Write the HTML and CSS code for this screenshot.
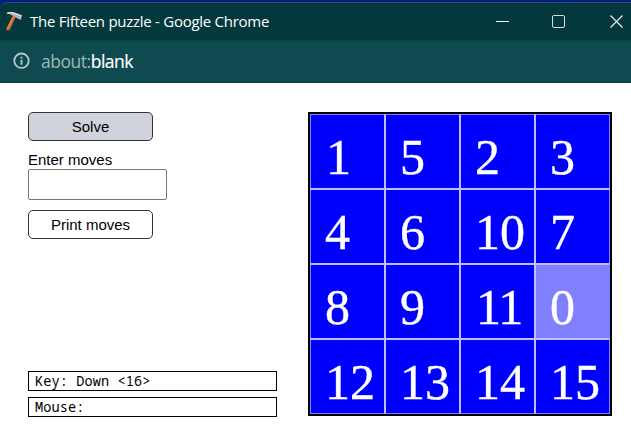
FILE: index.html
```
<!DOCTYPE html>
<html lang="en">
<head>
<meta charset="utf-8">
<title>The Fifteen puzzle</title>
<link rel="stylesheet" href="styles.css">
</head>
<body>
<div class="window">
  <header class="titlebar">
    <svg class="app-icon" width="18" height="21" viewBox="0 0 18 21">
      <path d="M7.8 4.5 10.8 5.7 5 18.6Q3 20.4 1 18.4Z" fill="#c9682a"/>
      <path d="M7.4 6 8.8 6.4 2.8 17.8 1.6 18Z" fill="#e58b48"/>
      <path d="M1.2 2.3Q5.5.2 9.5 1.4L17.2 4.2 15.8 9 9.8 6Q5.4 3 1.2 2.3Z" fill="#a9b2b5"/>
      <path d="M2 2.2Q6 .8 9.4 2.4L16 5" fill="none" stroke="#dfe4e5" stroke-width="1.2"/>
    </svg>
    <span class="title">The Fifteen puzzle - Google Chrome</span>
    <svg class="controls" width="135" height="34" viewBox="0 0 135 34" fill="none" stroke="#fff">
      <path d="M0 13.5h13"/>
      <rect x="56.5" y="7.5" width="12" height="12" rx="1.5" stroke="#d5dddd"/>
      <path d="M114.5 7.5l12 12M126.5 7.5l-12 12" stroke="#e8eeee" stroke-width="1.2"/>
    </svg>
  </header>
  <div class="addressbar">
    <svg class="info" width="18" height="18" viewBox="0 0 18 18">
      <circle cx="9.5" cy="8.7" r="7.2" fill="none" stroke="#b7c8ca" stroke-width="1.8"/>
      <path d="M8.6 7.8h1.8v5H8.6zM8.6 4.8h1.8v1.8H8.6z" fill="#b7c8ca"/>
    </svg>
    <span class="url">about:<span class="host">blank</span></span>
  </div>
  <main class="content">
    <section class="controls-panel">
      <button class="button button-active">Solve</button>
      <label class="label" for="moves">Enter moves</label>
      <input class="field" id="moves" type="text">
      <button class="button">Print moves</button>
      <div class="status status-key">Key: Down &lt;16&gt;</div>
      <div class="status">Mouse:</div>
    </section>
    <section class="board">
      <div class="tile tile-one">1</div><div class="tile">5</div><div class="tile">2</div><div class="tile">3</div>
      <div class="tile">4</div><div class="tile">6</div><div class="tile">10</div><div class="tile">7</div>
      <div class="tile">8</div><div class="tile">9</div><div class="tile tile-eleven">11</div><div class="tile tile-blank">0</div>
      <div class="tile">12</div><div class="tile">13</div><div class="tile">14</div><div class="tile">15</div>
    </section>
  </main>
</div>
</body>
</html>
```
FILE: styles.css
```
* { box-sizing: border-box; }
body { margin: 0; background: #fff; overflow: hidden; }
.window { width: 631px; height: 440px; padding-top: 2px; background: #00207a; }
.titlebar {
  display: flex;
  height: 39px;
  border-top: 1px solid #33487c;
  border-bottom: 1px solid #08444a;
  border-radius: 8px 0 0 0;
  background: #03393d;
}
.app-icon { margin: 8px 0 0 5px; flex: none; }
.title {
  margin-left: 7px;
  width: 466px;
  font: 15px/37px "Open Sans", "Noto Sans", sans-serif;
  letter-spacing: -0.27px;
  color: #fff;
  white-space: nowrap;
}
.controls { flex: none; margin-top: 5px; }
.addressbar {
  display: flex;
  align-items: center;
  height: 42px;
  padding-left: 12px;
  border-bottom: 2px solid #06444a;
  background: #0e4a50;
}
.url {
  margin-left: 11px;
  font: 17.5px/30px "Open Sans", "Noto Sans", sans-serif;
  letter-spacing: -0.48px;
  color: #9fb7b9;
}
.host { color: #fff; -webkit-text-stroke: 0.2px #fff; }
.content {
  display: flex;
  height: 357px;
  padding: 29px 0 0 28px;
  background: #fff;
}
.controls-panel {
  display: flex;
  flex-direction: column;
  align-items: flex-start;
  width: 280px;
  height: 305px;
}
.button {
  width: 125px;
  height: 29px;
  padding: 0;
  border: 1px solid #333;
  border-radius: 5px;
  background: #fff;
  color: #000;
  font: 15px "Liberation Sans", Arial, sans-serif;
}
.button-active { background: #d0d3dc; }
.label {
  margin-top: 10px;
  font: 15px/18px "Liberation Sans", Arial, sans-serif;
}
.field {
  width: 139px;
  height: 31px;
  margin-bottom: 10px;
  border: 1px solid #767676;
  border-radius: 2px;
}
.status {
  width: 249px;
  height: 20px;
  padding-left: 6px;
  border: 1px solid #000;
  font: 13.6px/18px "Noto Sans Mono", "DejaVu Sans Mono", monospace;
  letter-spacing: 0.1px;
  white-space: pre;
}
.status-key { margin: auto 0 6px; }
.board {
  display: grid;
  grid-template-columns: repeat(4, 75px);
  grid-template-rows: repeat(4, 75px);
  width: 304px;
  height: 304px;
  border: 2px solid #000;
}
.tile {
  padding: 17px 0 0 14px;
  border: 1px solid #bfbfff;
  background: #00f;
  color: #fff;
  font: 50px/50px "Liberation Serif", "Times New Roman", serif;
  -webkit-text-stroke: 0.4px #fff;
}
.tile:nth-child(4n) { border-right-color: #8080ff; }
.tile:nth-child(4n+1) { border-left-color: #8080ff; }
.tile:nth-child(-n+4) { border-top-color: #8080ff; }
.tile:nth-child(n+13) { border-bottom-color: #8080ff; }
.tile-one { padding-left: 15px; }
.tile-eleven { letter-spacing: -1px; padding-left: 15px; }
.tile-blank { background: #8080ff; }
```
